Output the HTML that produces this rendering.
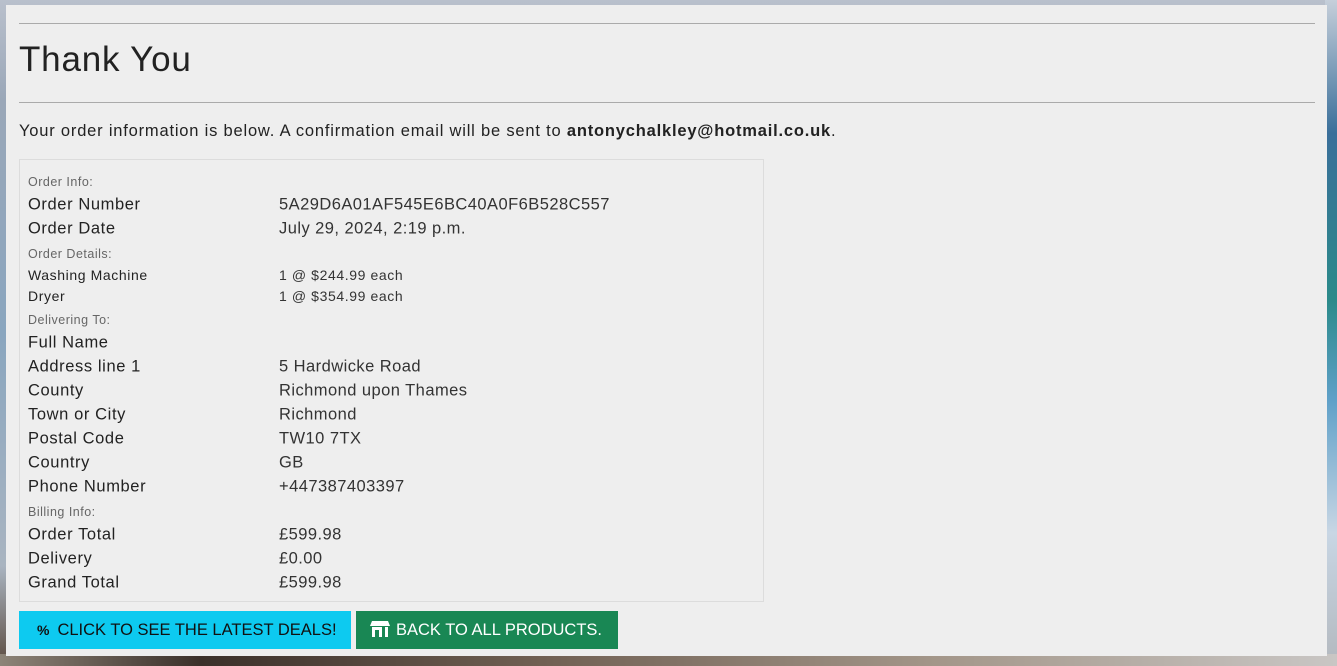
<!DOCTYPE html>
<html><head><meta charset="utf-8"><style>
body{margin:0;width:1337px;height:666px;overflow:hidden;font-family:"Liberation Sans",sans-serif;color:#222;
background:linear-gradient(180deg,#b9c0cc 0%,#9aa7b8 15%,#8aa6bf 50%,#a9b4c0 85%,#5b4a3e 100%);position:relative}
.bgr{position:absolute;right:0;top:0;width:12px;height:666px;background:linear-gradient(180deg,#c6cfda 0%,#3a6f9a 20%,#2b8a8a 45%,#5fa0c8 60%,#c8d6e4 80%,#b3b8be 100%)}
.bgb{position:absolute;left:0;bottom:0;width:1337px;height:12px;background:linear-gradient(90deg,#8d8478,#3b302a 15%,#6f5f52 40%,#a39689 70%,#c9c6c4)}
.panel{position:absolute;left:6px;top:5px;width:1321px;height:651px;background:#eeeeee}
hr{position:absolute;left:19px;width:1296px;border:0;border-top:1px solid #aaa;margin:0}
h1{position:absolute;left:19px;top:40px;margin:0;font-weight:400;font-size:35px;color:#222;letter-spacing:0.8px}
.intro{position:absolute;left:19px;top:122px;font-size:16.5px;letter-spacing:0.8px}
.box{position:absolute;left:19px;top:159px;width:745px;height:443px;border:1px solid #dcdcdc;box-sizing:border-box}
.r{position:absolute;white-space:nowrap;transform:translateY(-50%);margin-top:1px}
.s{font-size:12.5px;color:#666;letter-spacing:0.5px}
.m{font-size:16.5px;letter-spacing:0.6px}
.t{font-size:14px;letter-spacing:0.6px}
.v .m{letter-spacing:0.45px}
.btn{position:absolute;top:611px;height:38px;line-height:38px;font-size:16.5px;box-sizing:border-box}
</style></head><body>
<div class="bgr"></div><div class="bgb"></div>
<div class="panel"></div>
<hr style="top:23px"><h1>Thank You</h1><hr style="top:102px">
<div class="intro">Your order information is below. A confirmation email will be sent to <b>antonychalkley@hotmail.co.uk</b>.</div>
<div class="box"></div>
<div style="position:absolute;left:28px;top:0">
<div class="r s" style="top:181px">Order Info:</div>
<div class="r m" style="top:204px">Order Number</div>
<div class="r m" style="top:228px">Order Date</div>
<div class="r s" style="top:253px">Order Details:</div>
<div class="r t" style="top:274px">Washing Machine</div>
<div class="r t" style="top:295px">Dryer</div>
<div class="r s" style="top:319px">Delivering To:</div>
<div class="r m" style="top:342px">Full Name</div>
<div class="r m" style="top:366px">Address line 1</div>
<div class="r m" style="top:390px">County</div>
<div class="r m" style="top:414px">Town or City</div>
<div class="r m" style="top:438px">Postal Code</div>
<div class="r m" style="top:462px">Country</div>
<div class="r m" style="top:486px">Phone Number</div>
<div class="r s" style="top:511px">Billing Info:</div>
<div class="r m" style="top:534px">Order Total</div>
<div class="r m" style="top:558px">Delivery</div>
<div class="r m" style="top:582px">Grand Total</div>
</div>
<div class="v" style="position:absolute;left:279px;top:0;color:#333">
<div class="r m" style="top:204px">5A29D6A01AF545E6BC40A0F6B528C557</div>
<div class="r m" style="top:228px">July 29, 2024, 2:19 p.m.</div>
<div class="r t" style="top:274px">1 @ $244.99 each</div>
<div class="r t" style="top:295px">1 @ $354.99 each</div>
<div class="r m" style="top:366px">5 Hardwicke Road</div>
<div class="r m" style="top:390px">Richmond upon Thames</div>
<div class="r m" style="top:414px">Richmond</div>
<div class="r m" style="top:438px">TW10 7TX</div>
<div class="r m" style="top:462px">GB</div>
<div class="r m" style="top:486px">+447387403397</div>
<div class="r m" style="top:534px">£599.98</div>
<div class="r m" style="top:558px">£0.00</div>
<div class="r m" style="top:582px">£599.98</div>
</div>
<div class="btn" style="left:19px;width:332px;background:#0dcaf0;color:#111;padding-left:18px"><span style="font-weight:bold;font-size:14px;margin-right:8px">%</span>CLICK TO SEE THE LATEST DEALS!</div>
<div class="btn" style="left:356px;width:262px;background:#198754;color:#fff;padding-left:14px">
<svg width="20" height="17" viewBox="0 0 20 17" style="vertical-align:-2px;margin-right:6px"><path d="M2 1h16l2 5H0z" fill="#fff"/><rect x="2" y="7" width="3" height="10" fill="#fff"/><rect x="2" y="7" width="10" height="3" fill="#fff"/><rect x="9" y="7" width="3" height="10" fill="#fff"/><rect x="15" y="7" width="3" height="10" fill="#fff"/></svg>BACK TO ALL PRODUCTS.</div>
</body></html>
